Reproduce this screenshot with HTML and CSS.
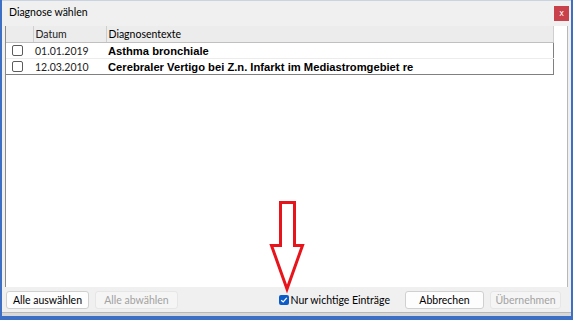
FILE: index.html
```html
<!DOCTYPE html>
<html lang="de">
<head>
    <meta charset="UTF-8">
    <title>Diagnose wählen</title>
    <link rel="stylesheet" href="styles.css">
</head>
<body>
    <div class="window">
        <div class="titlebar">
            <span class="title">Diagnose wählen</span>
            <button class="close">x</button>
        </div>

        <div class="panel">
            <table class="grid">
                <thead>
                    <tr>
                        <th class="col-check"></th>
                        <th class="col-date">Datum</th>
                        <th>Diagnosentexte</th>
                    </tr>
                </thead>
                <tbody>
                    <tr>
                        <td class="col-check"><span class="box"></span></td>
                        <td class="col-date">01.01.2019</td>
                        <td class="diag">Asthma bronchiale</td>
                    </tr>
                    <tr>
                        <td class="col-check"><span class="box"></span></td>
                        <td class="col-date">12.03.2010</td>
                        <td class="diag">Cerebraler Vertigo bei Z.n. Infarkt im Mediastromgebiet re</td>
                    </tr>
                </tbody>
            </table>

            <svg class="arrow" width="40" height="96" viewBox="0 0 40 96">
                <path d="M11.5 2.5 H25.5 V45.5 H33.5 L18 89 L2.5 45.5 H11.5 Z"
                      fill="none" stroke="#e8141c" stroke-width="3" stroke-linejoin="miter"/>
            </svg>
        </div>

        <div class="footer">
            <button class="btn">Alle auswählen</button>
            <button class="btn" disabled>Alle abwählen</button>
            <label class="only">
                <span class="checked">
                    <svg width="8" height="8" viewBox="0 0 8 8"><path d="M1.2 4.2 L3.2 6 L6.8 1.8" fill="none" stroke="#fff" stroke-width="1.2"/></svg>
                </span>
                Nur wichtige Einträge
            </label>
            <button class="btn btn-cancel">Abbrechen</button>
            <button class="btn btn-ok" disabled>Übernehmen</button>
        </div>
        <div class="under"></div>
    </div>
</body>
</html>
```

FILE: styles.css
```css
body {
    margin: 0;
    font-family: Lato, "Liberation Sans", sans-serif;
    font-size: 10.5px;
    color: #000;
    background: #3d6fc4;
}
.window {
    width: 569px;
    height: 316px;
    margin-left: 2px;
    background: #f0f0f0;
    border-top: 1px solid #c9d3e2;
    box-sizing: border-box;
    display: flex;
    flex-direction: column;
}
.titlebar {
    height: 23px;
    display: flex;
    align-items: center;
    justify-content: space-between;
    padding: 0 2px 0 7px;
}
.title {
    font-size: 10.5px;
    margin-top: -2px;
}
.close {
    width: 15px;
    height: 15px;
    padding: 0;
    border: none;
    background: #c9414a;
    color: #fff;
    font-family: "DejaVu Sans", sans-serif;
    font-size: 8px;
    line-height: 13px;
    margin-top: 1px;
}
.panel {
    position: relative;
    flex: 1;
    margin: 2px 3px 0 3px;
    background: #fff;
    border-left: 1px solid #8a8a8a;
    border-right: 1px solid #b8b8b8;
}
.grid {
    width: 548px;
    border-collapse: collapse;
    border-right: 1px solid #808080;
    border-bottom: 1px solid #808080;
}
.grid th {
    height: 16px;
    padding: 0 0 0 2px;
    text-align: left;
    font-weight: normal;
    background: #ececec;
    border-right: 1px solid #cfcfcf;
    border-bottom: 1px solid #c0c0c0;
    font-size: 10.5px;
}
.grid td {
    height: 15px;
    padding: 0 0 0 2px;
    border-bottom: 1px solid #ececec;
    font-size: 10.5px;
}
.grid tbody tr:last-child td {
    border-bottom: none;
}
.col-check {
    width: 21px;
}
.grid td.col-check {
    padding-left: 6px;
}
.col-date {
    width: 70px;
    color: #222;
}
.grid td.diag {
    font-family: "Liberation Sans", Arial, sans-serif;
    font-weight: bold;
    font-size: 11.2px;
}
.box {
    display: block;
    width: 9px;
    height: 9px;
    border: 1px solid #5c5c5c;
    border-radius: 2px;
    background: #fff;
}
.arrow {
    position: absolute;
    left: 263px;
    top: 174px;
}
.footer {
    height: 25px;
    display: flex;
    align-items: center;
    padding: 0 10px 0 4px;
    gap: 6px;
}
.btn {
    height: 18px;
    padding: 0;
    font-family: Lato, "Liberation Sans", sans-serif;
    font-size: 10.5px;
    background: #fdfdfd;
    border: 1px solid #d0d0d0;
    border-radius: 3px;
    color: #000;
    width: 83px;
}
.btn:disabled {
    background: #f5f5f5;
    border-color: #e6e6e6;
    color: #a2a2a2;
}
.only {
    display: flex;
    align-items: center;
    gap: 2px;
    margin-left: auto;
    margin-right: 9px;
    white-space: nowrap;
}
.checked {
    display: flex;
    align-items: center;
    justify-content: center;
    width: 10px;
    height: 10px;
    background: #0b5cc8;
    border-radius: 2px;
}
.btn-cancel {
    width: 79px;
}
.btn-ok {
    width: 71px;
}
.under {
    height: 3px;
    background: #d8d8d8;
    border-top: 1px solid #b8b8b8;
}
```
